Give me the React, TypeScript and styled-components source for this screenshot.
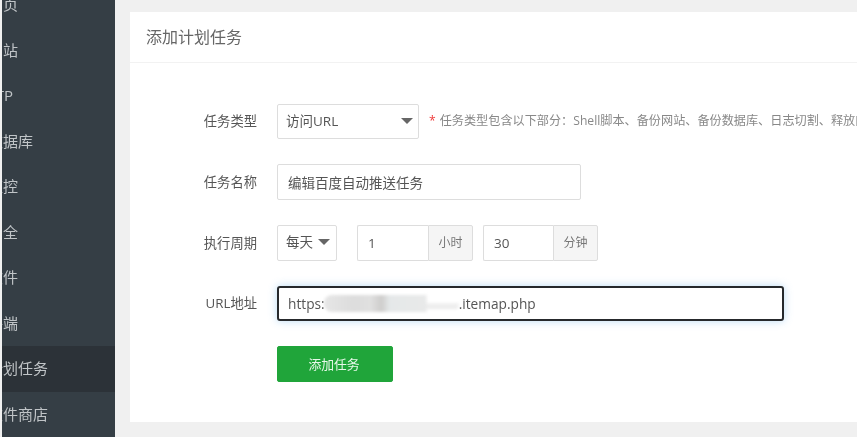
import React from "react";
import styled, { createGlobalStyle } from "styled-components";

const Global = createGlobalStyle`
  html, body { margin: 0; padding: 0; background: #f0f0f0; overflow: hidden; }
  body { font-family: "Open Sans", "Noto Sans CJK SC", sans-serif; }
  * { box-sizing: border-box; }
`;

const Page = styled.div`
  display: flex;
  width: 857px;
  height: 437px;
  overflow: hidden;
  background: #f0f0f0;
  padding-left: 2px;
  filter: blur(0.35px);
`;

const Sidebar = styled.nav`
  width: 113px;
  flex: none;
  background: #353e45;
  overflow: hidden;
`;

const NavList = styled.div`
  margin: -18px 0 0 -14px;
  width: 127px;
`;

const NavItem = styled.div<{ $active?: boolean }>`
  height: 45.5px;
  display: flex;
  align-items: center;
  padding-bottom: 2px;
  font-size: 15px;
  color: #c0c4c7;
  background: ${(p) => (p.$active ? "#2c3238" : "transparent")};
`;

const Main = styled.main`
  flex: 1;
  min-width: 0;
  padding: 12px 0 15px 15px;
`;

const Card = styled.section`
  height: 100%;
  background: #fff;
`;

const CardHeader = styled.header`
  height: 51px;
  padding: 0 0 2px 16px;
  display: flex;
  align-items: center;
  font-size: 16px;
  color: #666;
  border-bottom: 1px solid #f2f2f2;
`;

const Form = styled.div`
  padding-top: 41px;
  display: flex;
  flex-direction: column;
  gap: 25px;
`;

const Row = styled.div<{ $h: number }>`
  display: flex;
  align-items: center;
  height: ${(p) => p.$h}px;
  white-space: nowrap;
`;

const Label = styled.label`
  width: 127px;
  flex: none;
  text-align: right;
  margin-right: 20px;
  padding-bottom: 2px;
  font-size: 13.3px;
  color: #555;
`;

const SelectWrap = styled.div<{ $w: number }>`
  position: relative;
  width: ${(p) => p.$w}px;
  height: 100%;
  flex: none;
  &::after {
    content: "";
    position: absolute;
    top: 50%;
    right: ${(p) => (p.$w > 100 ? 6 : 7)}px;
    margin-top: -4px;
    border-left: 6px solid transparent;
    border-right: 6px solid transparent;
    border-top: 6px solid #666;
    pointer-events: none;
  }
`;

const Select = styled.select`
  appearance: none;
  width: 100%;
  height: 100%;
  padding: 0 0 2px 8px;
  border: 1px solid #ddd;
  border-radius: 2px;
  background: #fff;
  font: 13.5px "Open Sans", "Noto Sans CJK SC", sans-serif;
  color: #555;
  outline: none;
`;

const Hint = styled.span`
  margin-left: 10px;
  font-size: 12.15px;
  color: #888;
  position: relative;
  top: -2px;
`;

const Star = styled.span`
  color: #ef3a3a;
  margin-right: 4px;
`;

const TextInput = styled.input<{ $w: number }>`
  width: ${(p) => p.$w}px;
  height: 100%;
  flex: none;
  border: 1px solid #ddd;
  border-radius: 2px;
  padding: 0 10px 1px;
  background: #fff;
  font: 13.5px "Open Sans", "Noto Sans CJK SC", sans-serif;
  color: #555;
  outline: none;
`;

const Group = styled.div`
  display: flex;
  height: 100%;
  margin-left: 20px;
  &:last-child { margin-left: 10px; }
`;

const GroupInput = styled.input<{ $w: number }>`
  width: ${(p) => p.$w}px;
  height: 100%;
  border: 1px solid #ddd;
  border-right: 0;
  border-radius: 2px 0 0 2px;
  padding: 0 0 0 10px;
  background: #fff;
  font: 13.5px "Open Sans", "Noto Sans CJK SC", sans-serif;
  color: #555;
  outline: none;
`;

const Addon = styled.span`
  width: 45px;
  height: 100%;
  display: flex;
  align-items: center;
  justify-content: center;
  padding-bottom: 2px;
  background: #f5f5f5;
  border: 1px solid #ddd;
  border-radius: 0 2px 2px 0;
  font-size: 12px;
  color: #777;
`;

const FocusField = styled.div`
  width: 507px;
  height: 100%;
  flex: none;
  display: flex;
  align-items: center;
  padding: 0 9px 0 9px;
  border: 2px solid #26292c;
  border-radius: 3px;
  box-shadow: 0 0 8px rgba(102, 175, 233, 0.45);
  background: #fff;
  font-size: 13.7px;
  color: #555;
`;

const Smudge = styled.span`
  display: inline-block;
  width: 135px;
  height: 17px;
  margin: 0 0 0 -1px;
  border-radius: 8px;
  background:
    linear-gradient(90deg, #e6e6e6, #dcdcdc 30%, #e0e0e0 45%, #cecdcc 56%, #e5e8e9 64%, #e8e9e9 100%) left top / 76% 100% no-repeat,
    linear-gradient(#f2f2f2, #e9e9e9) right 70% / 26% 35% no-repeat;
  filter: blur(1.6px);
`;

const Submit = styled.button`
  margin-left: 147px;
  width: 116px;
  height: 100%;
  border: 1px solid #20a53a;
  border-radius: 2px;
  background: #20a53a;
  color: #e8f8ea;
  font: 12.8px "Open Sans", "Noto Sans CJK SC", sans-serif;
  padding: 0 2px 2px 0;
`;

const navItems = ["首页", "网站", "FTP", "数据库", "监控", "安全", "文件", "终端", "计划任务", "软件商店"];

export default function App() {
  return (
    <Page>
      <Global />
      <Sidebar>
        <NavList>
          {navItems.map((n) => (
            <NavItem key={n} $active={n === "计划任务"}>{n}</NavItem>
          ))}
        </NavList>
      </Sidebar>
      <Main>
        <Card>
          <CardHeader>添加计划任务</CardHeader>
          <Form>
            <Row $h={35}>
              <Label>任务类型</Label>
              <SelectWrap $w={142}>
                <Select defaultValue="url">
                  <option value="url">访问URL</option>
                </Select>
              </SelectWrap>
              <Hint>
                <Star>*</Star>任务类型包含以下部分：Shell脚本、备份网站、备份数据库、日志切割、释放内存、访问URL
              </Hint>
            </Row>
            <Row $h={36}>
              <Label>任务名称</Label>
              <TextInput $w={304} defaultValue="编辑百度自动推送任务" />
            </Row>
            <Row $h={36}>
              <Label>执行周期</Label>
              <SelectWrap $w={60}>
                <Select defaultValue="day">
                  <option value="day">每天</option>
                </Select>
              </SelectWrap>
              <Group>
                <GroupInput $w={71} defaultValue="1" />
                <Addon>小时</Addon>
              </Group>
              <Group>
                <GroupInput $w={70} defaultValue="30" />
                <Addon>分钟</Addon>
              </Group>
            </Row>
            <Row $h={35}>
              <Label>URL地址</Label>
              <FocusField>
                https:<Smudge />.itemap.php
              </FocusField>
            </Row>
            <Row $h={36}>
              <Submit>添加任务</Submit>
            </Row>
          </Form>
        </Card>
      </Main>
    </Page>
  );
}
